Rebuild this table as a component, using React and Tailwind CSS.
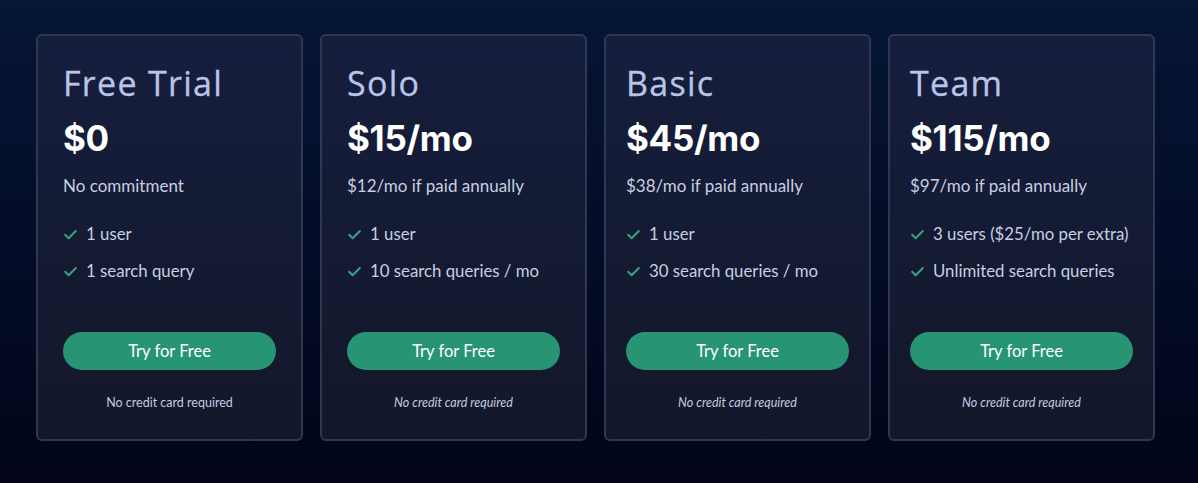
const plans = [
  {
    name: "Free Trial",
    price: "$0",
    note: "No commitment",
    features: ["1 user", "1 search query"],
    pad: "px-[25px]",
    italic: false,
  },
  {
    name: "Solo",
    price: "$15/mo",
    note: "$12/mo if paid annually",
    features: ["1 user", "10 search queries / mo"],
    pad: "px-[25px]",
    italic: true,
  },
  {
    name: "Basic",
    price: "$45/mo",
    note: "$38/mo if paid annually",
    features: ["1 user", "30 search queries / mo"],
    pad: "px-[20px]",
    italic: true,
  },
  {
    name: "Team",
    price: "$115/mo",
    note: "$97/mo if paid annually",
    features: ["3 users ($25/mo per extra)", "Unlimited search queries"],
    pad: "px-[20px]",
    italic: true,
  },
];

const Check = () => (
  <svg width="15" height="15" viewBox="0 0 24 24" fill="none" className="shrink-0">
    <path
      d="M3.5 12.5l5.5 5.5L20.5 6.5"
      stroke="#3a9e7f"
      strokeWidth="3.4"
      strokeLinecap="round"
      strokeLinejoin="round"
    />
  </svg>
);

function PlanCard({ plan }) {
  return (
    <div
      className={`flex flex-col h-[407px] rounded-md border-2 border-[#30384f] bg-gradient-to-b from-[#151e3d] to-[#13172a] ${plan.pad} pt-[26px]`}
    >
      <h2 className="text-[34px] leading-[42px] text-[#b9c5e8] font-['Open_Sans',sans-serif] tracking-[1.3px] [-webkit-text-stroke:0.3px_#b9c5e8]">
        {plan.name}
      </h2>
      <div className="mt-[13px] text-[35px] leading-[42px] font-bold text-white font-['Inter',sans-serif] tracking-[-0.3px]">
        {plan.price}
      </div>
      <p className="mt-[15px] text-[17px] leading-[24px] text-[#c8cfe0] font-['Lato',sans-serif]">
        {plan.note}
      </p>
      <ul className="mt-[24px] flex flex-col gap-[13px]">
        {plan.features.map((f) => (
          <li
            key={f}
            className="flex items-center gap-[8px] text-[16.8px] leading-[24px] text-[#c8cfe0] font-['Lato',sans-serif]"
          >
            <Check />
            <span>{f}</span>
          </li>
        ))}
      </ul>
      <button className="mt-[49px] h-[38px] w-full rounded-full bg-[#279474] text-[16.5px] text-white font-['Lato',sans-serif]">
        Try for Free
      </button>
      <p
        className={`mt-[24px] text-center text-[12.5px] text-[#c5cbe0] font-['Lato',sans-serif] ${
          plan.italic ? "italic" : ""
        }`}
      >
        No credit card required
      </p>
    </div>
  );
}

export default function App() {
  return (
    <div className="w-full h-[483px] bg-gradient-to-b from-[#061636] to-[#02051a] pt-[34px] px-[36px]">
      <div className="grid grid-cols-4 gap-[17px] w-[1119px]">
        {plans.map((p) => (
          <PlanCard key={p.name} plan={p} />
        ))}
      </div>
    </div>
  );
}
